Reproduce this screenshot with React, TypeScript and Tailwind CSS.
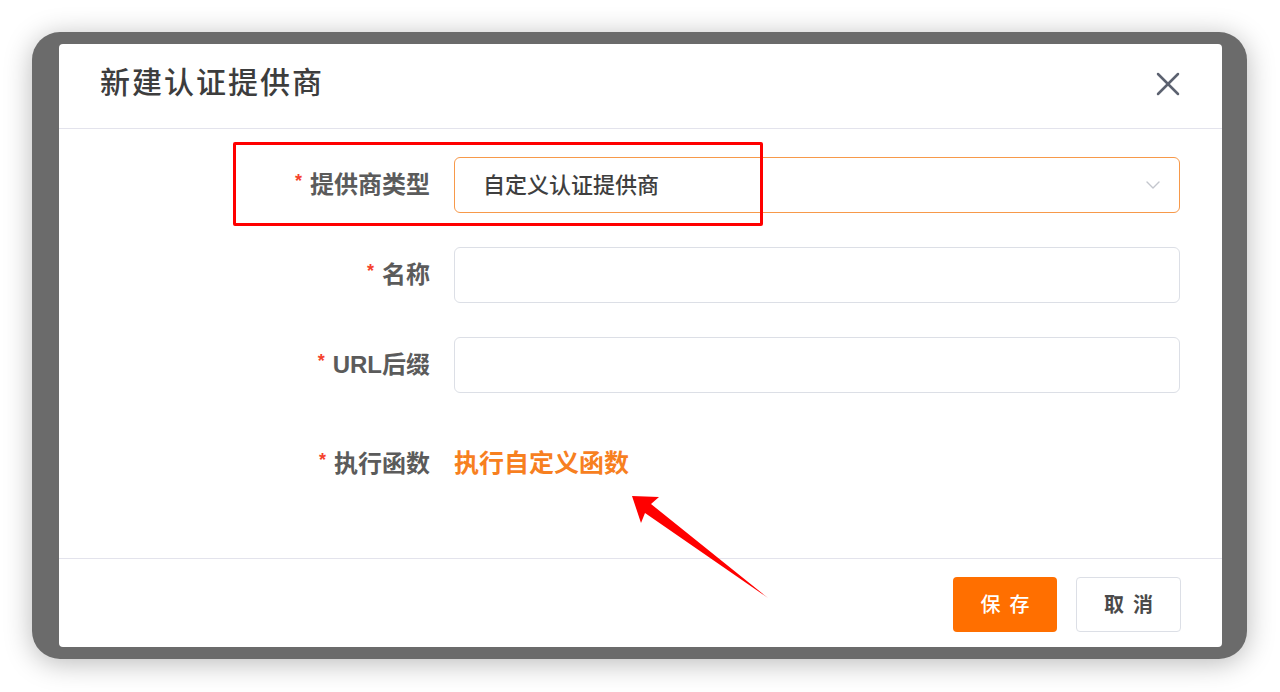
import { X, ChevronDown } from 'lucide-react'

const FONT = "font-['Helvetica_Neue','Liberation_Sans','Noto_Sans_CJK_SC',sans-serif]"

function Label({ text }: { text: string }) {
  return (
    <div className="w-[395px] shrink-0 flex justify-end items-center pr-[24px] text-[24px] font-semibold text-[#5b5b5b]">
      <span className="text-[#f5422d] text-[18px] mr-[8px] -mt-[8px]">*</span>
      {text}
    </div>
  )
}

export default function App() {
  return (
    <div className={`relative w-[1280px] h-[692px] bg-white overflow-hidden pt-[32px] pl-[32px] ${FONT}`}>
      <div className="w-[1215px] h-[627px] bg-[#6b6b6b] rounded-[28px] pt-[12px] pl-[27px] shadow-[0_4px_28px_rgba(0,0,0,0.28)]">
        <div className="w-[1163px] h-[603px] bg-white rounded-[4px] flex flex-col">
          {/* header */}
          <div className="h-[85px] shrink-0 flex items-center justify-between pl-[41px] pr-[34px] border-b border-[#e3e3ec]">
            <h2 className="text-[30px] text-[#3d3d3d] font-medium tracking-[2px] -mt-[8px]">新建认证提供商</h2>
            <X className="w-[40px] h-[40px] text-[#5c6270] -mt-[4px]" strokeWidth={1.5} />
          </div>

          {/* body */}
          <div className="flex-1 flex flex-col pt-[28px]">
            <div className="flex h-[56px]">
              <Label text="提供商类型" />
              <div className="w-[726px] h-[56px] border border-[#f7994a] rounded-[6px] flex items-center justify-between pl-[28px] pr-[14px]">
                <span className="text-[22px] text-[#3f3f3f] font-medium">自定义认证提供商</span>
                <ChevronDown className="w-[24px] h-[24px] text-[#c3c6cd]" strokeWidth={1.4} />
              </div>
            </div>

            <div className="flex h-[56px] mt-[34px]">
              <Label text="名称" />
              <div className="w-[726px] h-[56px] border border-[#dcdfe6] rounded-[6px]" />
            </div>

            <div className="flex h-[56px] mt-[34px]">
              <Label text="URL后缀" />
              <div className="w-[726px] h-[56px] border border-[#dcdfe6] rounded-[6px]" />
            </div>

            <div className="flex h-[56px] mt-[43px] items-center">
              <Label text="执行函数" />
              <span className="text-[25px] font-semibold text-[#f7801f]">执行自定义函数</span>
            </div>
          </div>

          {/* footer */}
          <div className="h-[89px] shrink-0 border-t border-[#e3e3ec] flex justify-end items-start gap-[19px] pt-[18px] pr-[41px]">
            <button className="w-[104px] h-[55px] rounded-[4px] bg-[#ff6f00] text-white text-[20px] font-medium tracking-[9px] pl-[9px]">
              保存
            </button>
            <button className="w-[105px] h-[55px] rounded-[4px] bg-white border border-[#dcdfe6] text-[#4a4a4a] text-[20px] font-semibold tracking-[9px] pl-[9px]">
              取消
            </button>
          </div>
        </div>
      </div>

      {/* annotations */}
      <div className="absolute left-[233px] top-[142px] w-[530px] h-[84px] border-[3px] border-[#ff0000] rounded-[2px]" />
      <svg className="absolute left-0 top-0" width="1280" height="692" viewBox="0 0 1280 692">
        <polygon points="632,496 659,497 651,504 768,598 645,513 641,523" fill="#ff0000" />
      </svg>
    </div>
  )
}
